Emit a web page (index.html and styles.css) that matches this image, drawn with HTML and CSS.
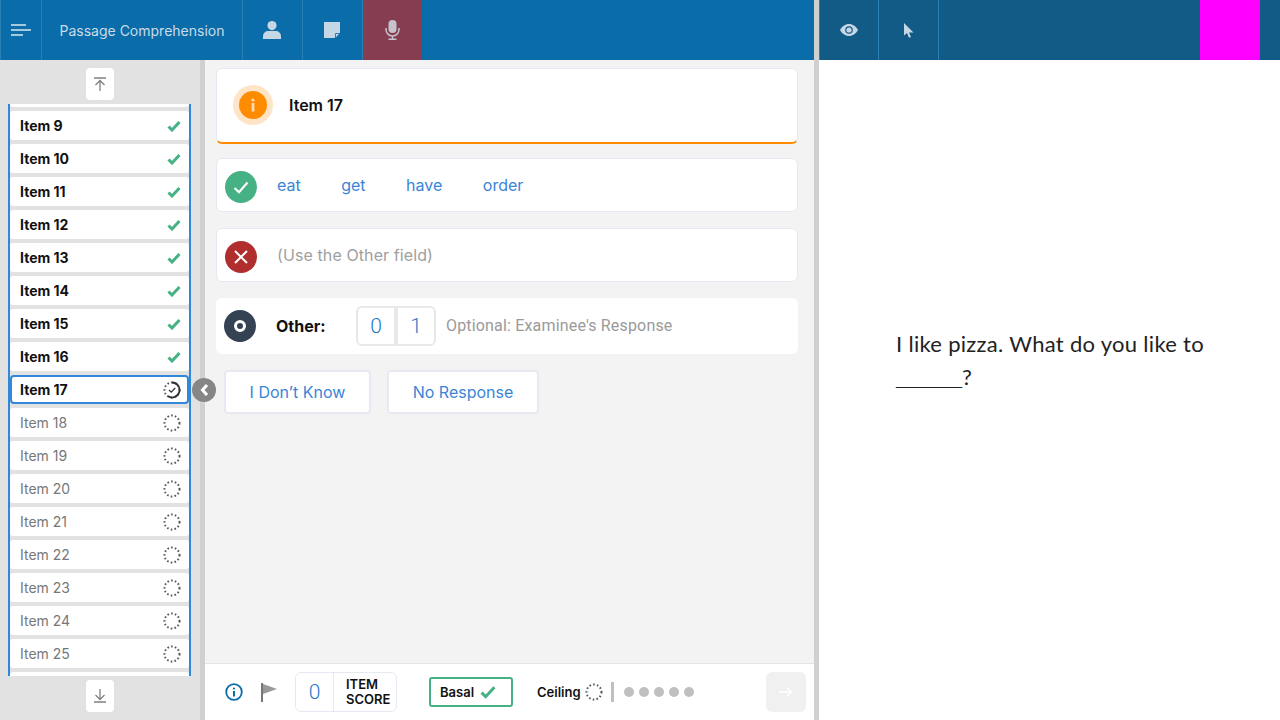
FILE: index.html
```html
<!DOCTYPE html>
<html lang="en">
<head>
  <meta charset="UTF-8">
  <meta name="viewport" content="width=device-width, initial-scale=1.0">
  <title>Passage Comprehension</title>
  <link rel="stylesheet" href="styles.css">
</head>
<body>
  <svg class="defs" width="0" height="0">
    <symbol id="tick" viewBox="0 0 14 12"><path d="M1.500 6.500 5 10 12.500 2" fill="none" stroke="currentColor" stroke-width="3"/></symbol>
    <symbol id="ring" viewBox="0 0 18 18"><circle cx="9" cy="9" r="7.500" fill="none" stroke="#555" stroke-width="2" stroke-dasharray="1.600 2.200"/></symbol>
  </svg>

  <div class="app">
    <section class="left-pane">
      <header class="topbar">
        <button class="top-btn menu-btn">
          <svg width="20" height="12" viewBox="0 0 20 12"><path d="M0 1h15M0 6h20M0 11h12" stroke="#dbe7f0" stroke-width="1.600"/></svg>
        </button>
        <div class="top-title">Passage Comprehension</div>
        <button class="top-btn">
          <svg width="18" height="18" viewBox="0 0 18 18"><circle cx="9" cy="4.600" r="4.600" fill="#c5d6e4"/><path d="M0 18v-2.600C0 12 2.600 10 5.400 10h7.200C15.400 10 18 12 18 15.400V18z" fill="#c5d6e4"/></svg>
        </button>
        <button class="top-btn">
          <svg width="16" height="16" viewBox="0 0 16 16"><path d="M0 0h16v10.500L10.500 16H0z" fill="#c5d6e4"/><path d="M11.500 16v-4.500H16z" fill="#c5d6e4" stroke="#0a6ca8" stroke-width=".8"/></svg>
        </button>
        <button class="top-btn mic-btn">
          <svg width="15" height="20" viewBox="0 0 15 20"><rect x="3.500" y="0" width="8" height="13" rx="4" fill="#c5c3cd"/><path d="M1 8v1.500a6.500 6.500 0 0 0 13 0V8M7.500 16v3M3.500 19.200h8" fill="none" stroke="#c5c3cd" stroke-width="1.500"/></svg>
        </button>
      </header>

      <div class="workspace">
        <aside class="sidebar">
          <button class="jump-btn">
            <svg width="14" height="14" viewBox="0 0 14 14"><path d="M1 1h12M7 14V4M2.500 8 7 3.500 11.500 8" fill="none" stroke="#808080" stroke-width="1.300"/></svg>
          </button>
          <div class="item-list">
            <ul class="items">
              <li class="item"></li>
              <li class="item done">Item 9<svg class="tick"><use href="#tick"/></svg></li>
              <li class="item done">Item 10<svg class="tick"><use href="#tick"/></svg></li>
              <li class="item done">Item 11<svg class="tick"><use href="#tick"/></svg></li>
              <li class="item done">Item 12<svg class="tick"><use href="#tick"/></svg></li>
              <li class="item done">Item 13<svg class="tick"><use href="#tick"/></svg></li>
              <li class="item done">Item 14<svg class="tick"><use href="#tick"/></svg></li>
              <li class="item done">Item 15<svg class="tick"><use href="#tick"/></svg></li>
              <li class="item done">Item 16<svg class="tick"><use href="#tick"/></svg></li>
              <li class="item done current">Item 17
                <svg class="ring" viewBox="0 0 18 18">
                  <circle cx="9" cy="9" r="7.500" fill="none" stroke="#555" stroke-width="2" stroke-dasharray="1.600 2.200"/>
                  <path d="M9 1.500A7.500 7.500 0 1 1 5 15.300" fill="none" stroke="#333" stroke-width="1.800"/>
                  <path d="M6 9l2.200 2.200L12.200 7" fill="none" stroke="#333" stroke-width="1.200"/>
                </svg>
              </li>
              <li class="item">Item 18<svg class="ring"><use href="#ring"/></svg></li>
              <li class="item">Item 19<svg class="ring"><use href="#ring"/></svg></li>
              <li class="item">Item 20<svg class="ring"><use href="#ring"/></svg></li>
              <li class="item">Item 21<svg class="ring"><use href="#ring"/></svg></li>
              <li class="item">Item 22<svg class="ring"><use href="#ring"/></svg></li>
              <li class="item">Item 23<svg class="ring"><use href="#ring"/></svg></li>
              <li class="item">Item 24<svg class="ring"><use href="#ring"/></svg></li>
              <li class="item">Item 25<svg class="ring"><use href="#ring"/></svg></li>
              <li class="item"></li>
            </ul>
          </div>
          <button class="jump-btn">
            <svg width="14" height="14" viewBox="0 0 14 14"><path d="M1 13h12M7 0v10M2.500 6 7 10.500 11.500 6" fill="none" stroke="#808080" stroke-width="1.300"/></svg>
          </button>
          <button class="collapse-btn">
            <svg width="9" height="14" viewBox="0 0 9 14"><path d="M7 2 2.500 7 7 12" fill="none" stroke="#fff" stroke-width="3"/></svg>
          </button>
        </aside>

        <main class="main">
          <div class="content">
            <div class="card title-card">
              <span class="info-halo">
                <span class="status-dot orange">
                  <svg width="4" height="14" viewBox="0 0 4 14"><circle cx="2" cy="2" r="1.600" fill="#ffdcb3"/><rect x=".6" y="5" width="2.800" height="8.500" fill="#ffdcb3"/></svg>
                </span>
              </span>
              <span class="title-text">Item 17</span>
            </div>

            <div class="card answer-card">
              <span class="status-dot green">
                <svg width="16" height="13" viewBox="0 0 16 13"><path d="M1.500 7 6 11.200 14.500 1.500" fill="none" stroke="#fff" stroke-width="2.200"/></svg>
              </span>
              <div class="answers">
                <span>eat</span>
                <span>get</span>
                <span>have</span>
                <span>order</span>
              </div>
            </div>

            <div class="card answer-card">
              <span class="status-dot red">
                <svg width="14" height="14" viewBox="0 0 14 14"><path d="M1 1l12 12M13 1 1 13" stroke="#fff" stroke-width="2"/></svg>
              </span>
              <span class="muted-note">(Use the Other field)</span>
            </div>

            <div class="other-card">
              <span class="status-dot navy"><span class="navy-hole"></span></span>
              <span class="other-label">Other:</span>
              <div class="score-toggle">
                <span>0</span>
                <span>1</span>
              </div>
              <span class="optional">Optional: Examinee's Response</span>
            </div>

            <div class="quick-buttons">
              <button class="quick-btn dont-know">I Don’t Know</button>
              <button class="quick-btn no-response">No Response</button>
            </div>
          </div>

          <footer class="bottom-bar">
            <svg class="info-icon" width="18" height="18" viewBox="0 0 18 18"><circle cx="9" cy="9" r="7.800" fill="none" stroke="#0a6ca8" stroke-width="1.800"/><circle cx="9" cy="5.500" r="1.100" fill="#0a6ca8"/><rect x="8" y="8" width="2" height="5.500" fill="#0a6ca8"/></svg>
            <svg class="flag-icon" width="16" height="19" viewBox="0 0 16 19"><path d="M0 0h2v19H0z" fill="#777"/><path d="M2 1 16 6 2 11z" fill="#999"/></svg>
            <div class="item-score">
              <span class="score-value">0</span>
              <span class="score-label">ITEM<br>SCORE</span>
            </div>
            <div class="basal">Basal
              <svg width="18" height="14" viewBox="0 0 14 12"><path d="M1.500 6.500 5 10 12.500 2" fill="none" stroke="#45b184" stroke-width="2.600"/></svg>
            </div>
            <div class="ceiling">
              <span>Ceiling</span>
              <svg class="ceiling-ring"><use href="#ring"/></svg>
            </div>
            <span class="separator"></span>
            <div class="dots">
              <span></span><span></span><span></span><span></span><span></span>
            </div>
            <button class="next-btn">
              <svg width="14" height="12" viewBox="0 0 14 12"><path d="M0 6h12.500M8 1.500 12.500 6 8 10.500" fill="none" stroke="#fff" stroke-width="1.400"/></svg>
            </button>
          </footer>
        </main>
      </div>
    </section>

    <section class="right-pane">
      <header class="topbar dark">
        <button class="top-btn">
          <svg width="18" height="12" viewBox="0 0 18 12"><path d="M0 6C2 2.500 5.200 0 9 0s7 2.500 9 6c-2 3.500-5.200 6-9 6S2 9.500 0 6z" fill="#c5d6e4"/><circle cx="9" cy="6" r="3.800" fill="#135b87"/><circle cx="9" cy="6" r="2.600" fill="#c5d6e4"/></svg>
        </button>
        <button class="top-btn">
          <svg width="10" height="15" viewBox="0 0 10 15"><path d="M0 0v12.500L3 10l2 4.800 2-.9-2-4.500h4.500z" fill="#c5d6e4"/></svg>
        </button>
        <span class="top-spacer"></span>
        <span class="magenta"></span>
      </header>
      <div class="passage">
        <p>I like pizza. What do you like to <span class="blank">______</span>?</p>
      </div>
    </section>
  </div>
</body>
</html>
```

FILE: styles.css
```css
* {
  box-sizing: border-box;
}
html, body {
  margin: 0;
  height: 100%;
  overflow: hidden;
}
body {
  font-family: Inter, "Liberation Sans", sans-serif;
  background-color: #fff;
}
button {
  font-family: inherit;
  padding: 0;
  cursor: pointer;
}
.defs {
  position: absolute;
}
.app {
  display: flex;
  height: 720px;
}

/* top bars */
.left-pane {
  width: 814px;
  display: flex;
  flex-direction: column;
}
.right-pane {
  flex: 1;
  display: flex;
  flex-direction: column;
  border-left: 5px solid #d0d0d0;
}
.topbar {
  height: 60px;
  flex: none;
  display: flex;
  background-color: #0a6ca8;
}
.topbar.dark {
  background-color: #135b87;
  box-shadow: inset 1px 0 0 #2a80b5;
}
.top-btn {
  width: 60px;
  height: 60px;
  padding-right: 1px;
  display: flex;
  align-items: center;
  justify-content: center;
  background: transparent;
  border: none;
  border-right: 1px solid #2a80b5;
}
.dark .top-btn {
  padding-right: 0;
}
.menu-btn {
  width: 42px;
  border-left: 1px solid #2a80b5;
}
.mic-btn {
  width: 59px;
  background-color: #863d50;
  border-right: none;
}
.top-title {
  width: 201px;
  display: flex;
  align-items: center;
  justify-content: center;
  font-size: 14px;
  color: #c9dbe8;
  border-right: 1px solid #2a80b5;
}
.top-spacer {
  width: 261px;
}
.magenta {
  width: 60px;
  background-color: #ff00ff;
}

.workspace {
  flex: 1;
  display: flex;
  min-height: 0;
}

/* item list */
.sidebar {
  position: relative;
  width: 205px;
  flex: none;
  display: flex;
  flex-direction: column;
  padding: 8px 0;
  background-color: #e2e2e2;
  border-right: 5px solid #d0d0d0;
}
.jump-btn {
  width: 28px;
  height: 32px;
  flex: none;
  margin-left: 86px;
  display: flex;
  align-items: center;
  justify-content: center;
  background: #fff;
  border: none;
  border-radius: 4px;
}
.item-list {
  width: 183px;
  height: 572px;
  flex: none;
  margin: 4px 0 4px 8px;
  overflow: hidden;
  border-left: 2px solid #2f88d8;
  border-right: 2px solid #2f88d8;
}
.items {
  list-style: none;
  margin: -26px 0 0;
  padding: 0;
}
.item {
  height: 29px;
  margin-bottom: 4px;
  padding: 0 8px 0 10px;
  display: flex;
  align-items: center;
  justify-content: space-between;
  background: #fff;
  border-radius: 3px;
  font-size: 14px;
  color: #777;
}
.item.done {
  font-weight: 700;
  color: #111;
}
.item.current {
  border: 2px solid #2f88d8;
  border-radius: 4px;
  padding: 0 6px 0 8px;
}
.tick {
  width: 14px;
  height: 12px;
  color: #45b184;
}
.ring {
  width: 18px;
  height: 18px;
}
.collapse-btn {
  position: absolute;
  left: 192px;
  top: 318px;
  width: 24px;
  height: 24px;
  display: flex;
  align-items: center;
  justify-content: center;
  background-color: #868686;
  border: none;
  border-radius: 50%;
}

/* main column */
.main {
  flex: 1;
  display: flex;
  flex-direction: column;
  min-width: 0;
  background-color: #f3f3f3;
}
.content {
  flex: 1;
  padding: 8px 16px 0 11px;
  display: flex;
  flex-direction: column;
}
.card {
  display: flex;
  align-items: center;
  background: #fff;
  border: 1px solid #e6e9f2;
  border-radius: 6px;
}
.title-card {
  height: 76px;
  padding: 0 0 1px 16px;
  gap: 16px;
  margin-bottom: 14px;
  border-bottom: 2px solid #ff8c00;
}
.info-halo {
  width: 40px;
  height: 40px;
  display: flex;
  align-items: center;
  justify-content: center;
  background-color: #ffe4c7;
  border-radius: 50%;
}
.title-text {
  font-size: 16px;
  font-weight: 600;
  color: #111;
}
.answer-card {
  height: 54px;
  padding-left: 8px;
  margin-bottom: 16px;
}
.answer-card .status-dot {
  margin-top: 4px;
}
.status-dot {
  width: 32px;
  height: 32px;
  flex: none;
  display: flex;
  align-items: center;
  justify-content: center;
  border-radius: 50%;
}
.orange {
  width: 28px;
  height: 28px;
  background-color: #ff8c00;
}
.green {
  background-color: #45b184;
}
.red {
  background-color: #b02e2e;
}
.navy {
  background-color: #344254;
}
.navy-hole {
  width: 12px;
  height: 12px;
  border: 3px solid #fff;
  border-radius: 50%;
}
.answers {
  display: flex;
  gap: 40.500px;
  margin-left: 20px;
  font-size: 16px;
  color: #3a85d6;
}
.muted-note {
  margin-left: 20px;
  font-size: 16px;
  letter-spacing: .1px;
  color: #a0a0a0;
}
.other-card {
  height: 56px;
  display: flex;
  align-items: center;
  padding-left: 8px;
  background: #fff;
  border-radius: 6px;
}
.other-label {
  width: 80px;
  margin-left: 20px;
  font-size: 16px;
  font-weight: 700;
  color: #111;
}
.score-toggle {
  display: flex;
  width: 80px;
  height: 40px;
  border: 2px solid #e8e8e8;
  border-radius: 6px;
}
.score-toggle span {
  flex: 1;
  display: flex;
  align-items: center;
  justify-content: center;
  font-family: Roboto, sans-serif;
  font-size: 21px;
  font-weight: 300;
  color: #1f78c8;
}
.score-toggle span + span {
  border-left: 4px solid #e8e8e8;
}
.optional {
  margin: 0 0 2px 10px;
  font-family: Roboto, sans-serif;
  font-size: 16px;
  letter-spacing: .17px;
  color: #9a9a9a;
}
.quick-buttons {
  display: flex;
  gap: 16px;
  margin: 16px 0 0 8px;
}
.quick-btn {
  height: 44px;
  background: #fff;
  border: 2px solid #e6e9f2;
  border-radius: 4px;
  font-size: 16px;
  color: #3a85d6;
}
.dont-know {
  width: 147px;
}
.no-response {
  width: 152px;
}

/* bottom bar */
.bottom-bar {
  height: 57px;
  flex: none;
  display: flex;
  align-items: center;
  padding-left: 20px;
  background: #fff;
  border-top: 1px solid #e4e4e4;
}
.flag-icon {
  margin-left: 18px;
}
.item-score {
  display: flex;
  align-items: center;
  width: 102px;
  height: 40px;
  margin-left: 18px;
  border: 1px solid #e6e9f2;
  border-radius: 6px;
}
.score-value {
  width: 38px;
  height: 100%;
  display: flex;
  align-items: center;
  justify-content: center;
  border-right: 1px solid #e6e9f2;
  font-family: Roboto, sans-serif;
  font-size: 21px;
  font-weight: 300;
  color: #1f78c8;
}
.score-label {
  margin-left: 12px;
  font-size: 13px;
  font-weight: 600;
  line-height: 15px;
  color: #111;
}
.basal {
  width: 84px;
  height: 30px;
  margin-left: 32px;
  padding-left: 9px;
  display: flex;
  align-items: center;
  gap: 5px;
  border: 2px solid #45b184;
  border-radius: 3px;
  font-size: 13px;
  font-weight: 600;
  color: #111;
}
.ceiling {
  display: flex;
  align-items: center;
  gap: 4px;
  margin-left: 24px;
  font-size: 13px;
  font-weight: 600;
  color: #111;
}
.ceiling-ring {
  width: 18px;
  height: 18px;
}
.separator {
  width: 3px;
  height: 20px;
  margin-left: 8px;
  background-color: #c0c0c0;
}
.dots {
  display: flex;
  gap: 5px;
  margin-left: 10px;
}
.dots span {
  width: 10px;
  height: 10px;
  background-color: #bfbfbf;
  border-radius: 50%;
}
.next-btn {
  width: 40px;
  height: 40px;
  margin-left: auto;
  margin-right: 8px;
  display: flex;
  align-items: center;
  justify-content: center;
  background-color: #f0f0f0;
  border: none;
  border-radius: 6px;
}

/* passage */
.passage {
  flex: 1;
  display: flex;
  align-items: center;
  padding: 0 62px 60px 77px;
  background: #fff;
}
.passage p {
  margin: 0;
  font-family: Lato, sans-serif;
  font-size: 22px;
  line-height: 33px;
  letter-spacing: .3px;
  color: #222;
}
.blank {
  font-family: "Liberation Serif", serif;
  letter-spacing: 0;
}
```
